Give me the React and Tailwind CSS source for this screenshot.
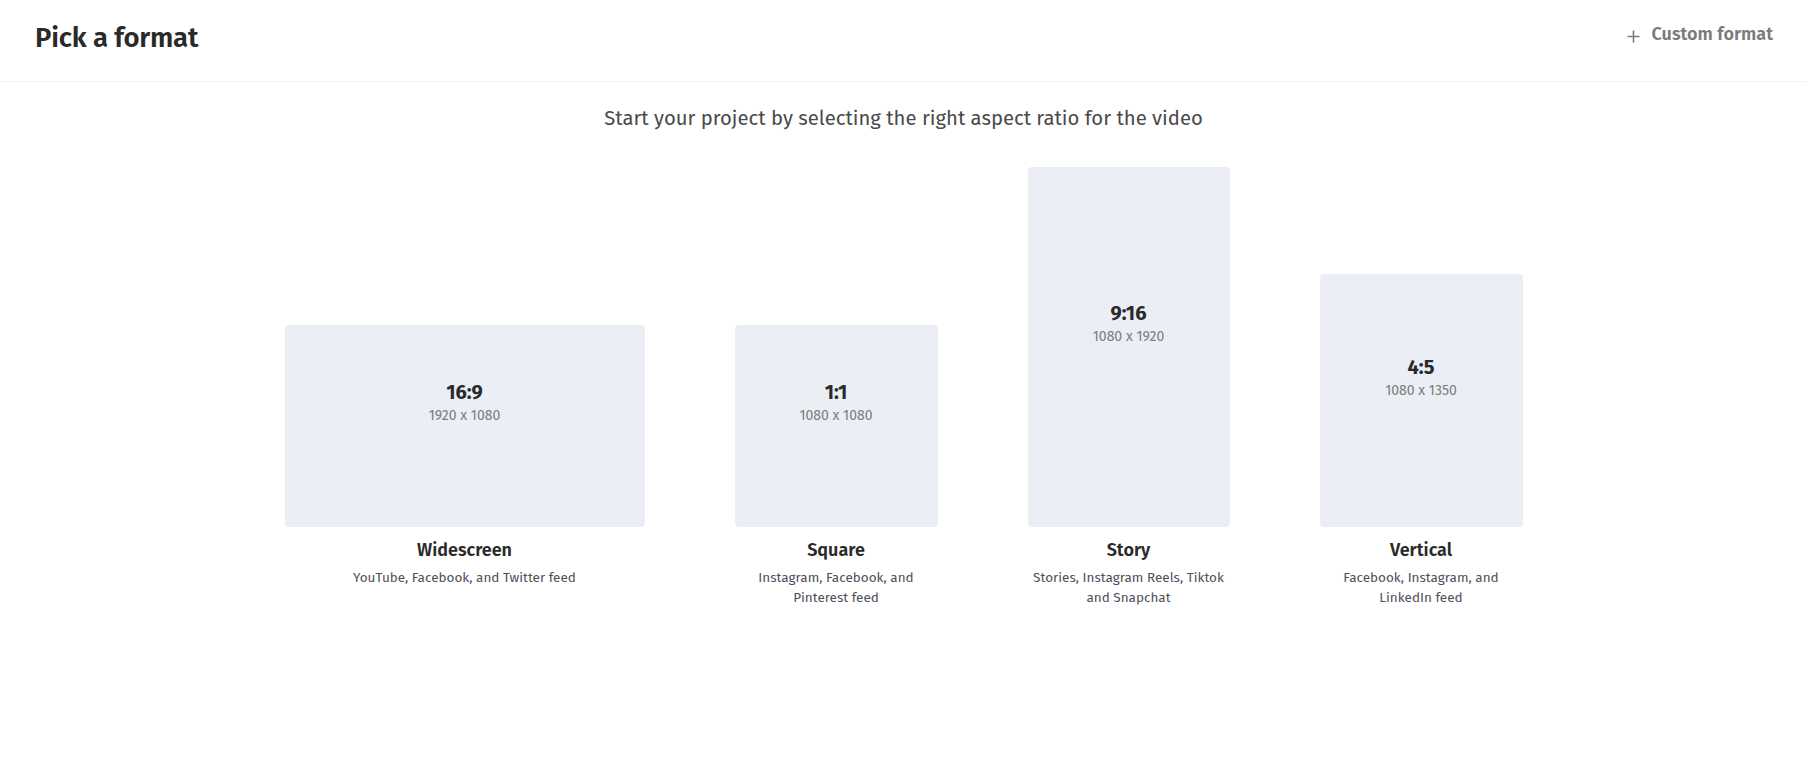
import React from "react";

const formats = [
  { ratio: "16:9", dims: "1920 x 1080", name: "Widescreen", desc: "YouTube, Facebook, and Twitter feed", w: "w-[360px]", h: "h-[202px]" },
  { ratio: "1:1", dims: "1080 x 1080", name: "Square", desc: "Instagram, Facebook, and Pinterest feed", w: "w-[203px]", h: "h-[202px]" },
  { ratio: "9:16", dims: "1080 x 1920", name: "Story", desc: "Stories, Instagram Reels, Tiktok and Snapchat", w: "w-[202px]", h: "h-[360px]" },
  { ratio: "4:5", dims: "1080 x 1350", name: "Vertical", desc: "Facebook, Instagram, and LinkedIn feed", w: "w-[203px]", h: "h-[253px]" },
];

export default function App() {
  return (
    <div className="min-h-[778px] bg-white text-[#2a2a2a]" style={{ fontFamily: '"Fira Sans", "Open Sans", "Noto Sans", sans-serif' }}>
      <header className="h-[82px] border-b border-[#f1f1f1] flex items-center justify-between pl-[35px] pr-[34px]">
        <h1 className="text-[27.5px] font-semibold tracking-[-0.2px] text-[#2a2a2a] -mt-[6px]">Pick a format</h1>
        <button className="flex items-center gap-[12px] text-[#7b7b7b] text-[18px] font-semibold -mt-[12px]">
          <svg width="13" height="13" viewBox="0 0 13 13" className="mt-[3px]">
            <path d="M6.5 0.5V12.5M0.5 6.5H12.5" stroke="#7b7b7b" strokeWidth="1.6" />
          </svg>
          Custom format
        </button>
      </header>
      <p className="text-center text-[20.3px] leading-[28px] text-[#4a4a4a] mt-[22px]">
        Start your project by selecting the right aspect ratio for the video
      </p>
      <div className="flex justify-center gap-[90px] mt-[35px]">
        {formats.map((f) => (
          <div key={f.name} className={`${f.w} flex flex-col items-center`}>
            <div className="h-[360px] w-full flex items-end">
              <div className={`${f.h} w-full rounded-[4px] bg-[#ebeef5] flex flex-col items-center justify-center pb-[46px] cursor-pointer`}>
                <div className="text-[20px] leading-[24px] font-bold text-[#2a2a2a]">{f.ratio}</div>
                <div className="mt-[2px] text-[14px] leading-[20px] text-[#7d7d7d]">{f.dims}</div>
              </div>
            </div>
            <div className="mt-[11px] text-[18px] leading-[24px] font-semibold text-[#2a2a2a]">{f.name}</div>
            <div className="mt-[6px] text-[13.5px] leading-[20px] text-[#50505a] text-center">{f.desc}</div>
          </div>
        ))}
      </div>
    </div>
  );
}
